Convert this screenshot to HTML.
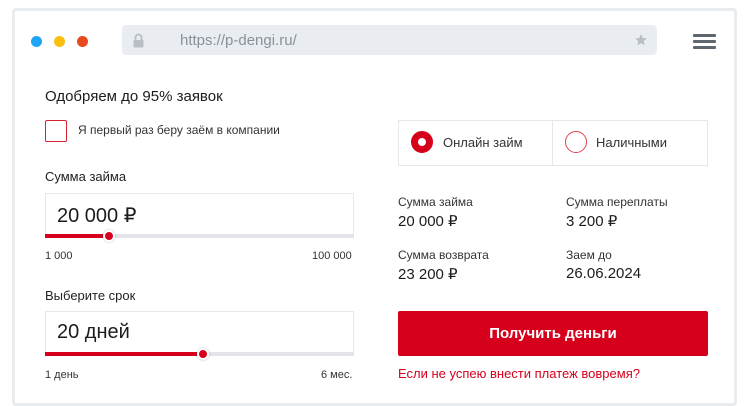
<!DOCTYPE html>
<html><head><meta charset="utf-8"><style>
*{margin:0;padding:0;box-sizing:border-box}
body{width:751px;height:406px;background:#fff;font-family:"Liberation Sans",sans-serif;color:#1c1c1c;position:relative;overflow:hidden}
.a{position:absolute}
.frame{left:12px;top:8px;width:725px;height:398px;border:3px solid #e9ecef;border-radius:4px}
.dot{width:11px;height:11px;border-radius:50%;top:36px}
.url{left:122px;top:25px;width:535px;height:30px;background:#e9ecf0;border-radius:4px}
.hb{left:693px;width:23px;height:3px;background:#5f6670;border-radius:1px}
.lbl{font-size:13px;color:#222}
.inp{left:45px;width:309px;height:42px;border:1px solid #e6e8eb;border-bottom:none;font-size:20px;padding:9px 0 0 11px;color:#1c1c1c}
.track{left:45px;width:309px;height:4px;background:#e3e4ea}
.fill{left:45px;height:4px;background:#d6001c}
.knob{width:12px;height:12px;border-radius:50%;background:#d6001c;border:2px solid #fff;box-shadow:0 0 2px rgba(0,0,0,.25)}
.sm{font-size:11px;color:#333}
.sl{font-size:12px;color:#333}
.sv{font-size:15px;color:#1c1c1c}
</style></head><body>
<div class="a frame"></div>
<div class="a dot" style="left:31px;background:#1ea5f5"></div>
<div class="a dot" style="left:54px;background:#fbbf0f"></div>
<div class="a dot" style="left:77px;background:#e84a1f"></div>
<div class="a url"></div>
<svg class="a" style="left:132px;top:33px" width="13" height="15" viewBox="0 0 13 15"><path d="M3.5 7V4.5a3 3 0 0 1 6 0V7" fill="none" stroke="#b9bec5" stroke-width="1.8"/><rect x="1.5" y="7" width="10" height="7.5" rx="1" fill="#b9bec5"/></svg>
<div class="a" style="left:180px;top:32px;font-size:15px;color:#8a9099">https://p-dengi.ru/</div>
<svg class="a" style="left:634px;top:33px" width="14" height="14" viewBox="0 0 24 24"><path d="M12 2l2.9 6.6 7.1.6-5.4 4.7 1.6 7L12 17.3 5.8 21l1.6-7L2 9.2l7.1-.6z" fill="#b9bec5"/></svg>
<div class="a hb" style="top:34px"></div><div class="a hb" style="top:40px"></div><div class="a hb" style="top:46px"></div>

<div class="a" style="left:45px;top:88px;font-size:15px">Одобряем до 95% заявок</div>
<div class="a" style="left:45px;top:120px;width:22px;height:22px;border:1px solid #d9222f;border-radius:2px"></div>
<div class="a" style="left:78px;top:123px;font-size:12px;color:#333">Я первый раз беру заём в компании</div>

<div class="a lbl" style="left:45px;top:169px">Сумма займа</div>
<div class="a inp" style="top:193px">20 000 ₽</div>
<div class="a track" style="top:234px"></div>
<div class="a fill" style="top:234px;width:64px"></div>
<div class="a knob" style="left:103px;top:230px"></div>
<div class="a sm" style="left:45px;top:250px">1 000</div>
<div class="a sm" style="left:312px;top:250px">100 000</div>

<div class="a lbl" style="left:45px;top:288px">Выберите срок</div>
<div class="a inp" style="top:311px">20 дней</div>
<div class="a track" style="top:352px"></div>
<div class="a fill" style="top:352px;width:158px"></div>
<div class="a knob" style="left:197px;top:348px"></div>
<div class="a sm" style="left:45px;top:369px">1 день</div>
<div class="a sm" style="left:321px;top:369px">6 мес.</div>

<div class="a" style="left:398px;top:120px;width:310px;height:46px;border:1px solid #e5e7ea"></div>
<div class="a" style="left:552px;top:120px;width:1px;height:46px;background:#e5e7ea"></div>
<div class="a" style="left:411px;top:131px;width:22px;height:22px;border-radius:50%;border:7px solid #d6001c;background:#fff"></div>
<div class="a" style="left:443px;top:135px;font-size:13px;color:#333">Онлайн займ</div>
<div class="a" style="left:565px;top:131px;width:22px;height:22px;border-radius:50%;border:1px solid #e0424f"></div>
<div class="a" style="left:596px;top:135px;font-size:13px;color:#333">Наличными</div>

<div class="a sl" style="left:398px;top:195px">Сумма займа</div>
<div class="a sv" style="left:398px;top:212px">20 000 ₽</div>
<div class="a sl" style="left:566px;top:195px">Сумма переплаты</div>
<div class="a sv" style="left:566px;top:212px">3 200 ₽</div>
<div class="a sl" style="left:398px;top:248px">Сумма возврата</div>
<div class="a sv" style="left:398px;top:265px">23 200 ₽</div>
<div class="a sl" style="left:566px;top:248px">Заем до</div>
<div class="a sv" style="left:566px;top:265px">26.06.2024</div>

<div class="a" style="left:398px;top:311px;width:310px;height:45px;background:#d6001c;border-radius:2px;color:#fff;font-size:15px;font-weight:bold;text-align:center;line-height:45px">Получить деньги</div>
<div class="a" style="left:398px;top:366px;font-size:13px;color:#d6001c">Если не успею внести платеж вовремя?</div>
</body></html>
